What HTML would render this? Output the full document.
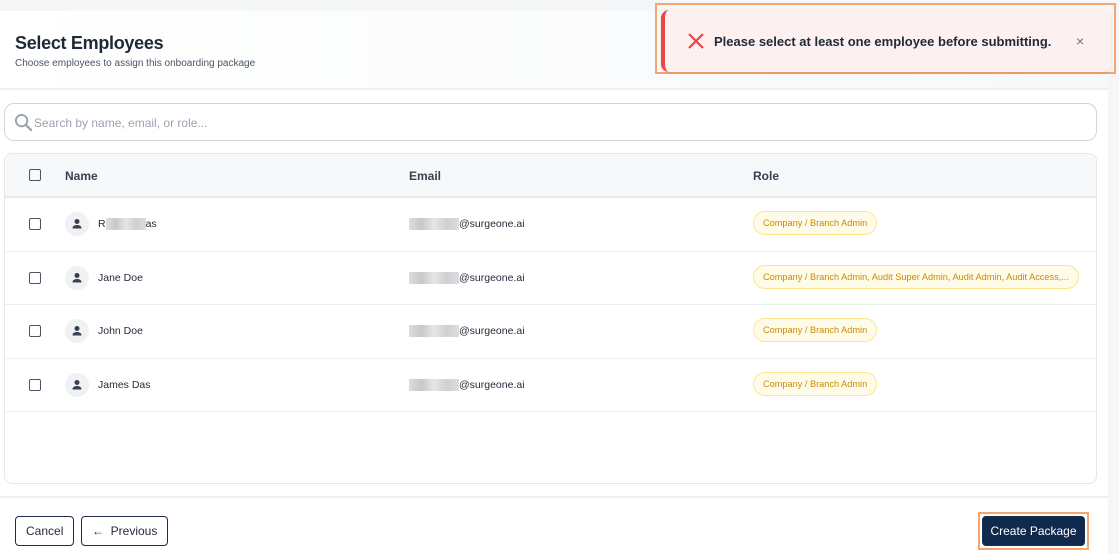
<!DOCTYPE html>
<html><head><meta charset="utf-8"><style>
*{box-sizing:border-box;margin:0;padding:0}
body{width:1119px;height:554px;overflow:hidden;background:#f5f6f8;font-family:"Liberation Sans",sans-serif;color:#111827;position:relative}
.card{position:absolute;left:0;top:11px;width:1108px;height:543px;background:#fff}
.hdr{position:absolute;left:0;top:0;width:1108px;height:79px;background:linear-gradient(90deg,#fff,#f7f8fa);border-bottom:2px solid #eef0f3}
.hdr h1{position:absolute;left:15px;top:22px;font-size:18px;font-weight:bold;color:#1f2937;letter-spacing:-0.3px}
.hdr p{position:absolute;left:15px;top:47px;font-size:10px;color:#4b5563}
.search{position:absolute;left:4px;top:92px;width:1093px;height:38px;border:1px solid #d1d5db;border-radius:10px}
.search span{position:absolute;left:29px;top:12px;font-size:12px;color:#9ca3af}
.tbl{position:absolute;left:4px;top:142px;width:1093px;height:331px;border:1px solid #e5e7eb;border-radius:8px;overflow:hidden}
.th{height:44px;background:#f7f8fa;border-bottom:2px solid #e5e7eb;position:relative;font-size:12px;font-weight:bold;color:#374151}
.row{height:53.5px;border-bottom:1px solid #eceef1;position:relative;font-size:10.5px;color:#1f2937}
.cb{position:absolute;left:24px;width:12px;height:12px;border:1.3px solid #4b5563;border-radius:2px;top:50%;margin-top:-6px}
.av{position:absolute;left:60px;top:14px;width:24px;height:24px;border-radius:50%;background:#f0f1f3}
.nm{position:absolute;left:93px;top:20px}
.em{position:absolute;left:404px;top:20px}
.blur{display:inline-block;width:50px;height:12px;vertical-align:middle;background:linear-gradient(90deg,#ddd,#c8c8cc,#e6e6e6,#cfd0d4,#ddd)}
.badge{position:absolute;left:748px;top:13px;height:24px;line-height:22px;padding:0 9px;border:1px solid #fde68a;background:#fefce8;border-radius:12px;font-size:9.2px;color:#ca8a04}
.foot{position:absolute;left:0;top:485px;width:1108px;height:2px;background:#eef0f3}
.btn{position:absolute;top:505px;height:30px;border:1px solid #1e2b4a;border-radius:4px;font-size:12px;line-height:28px;padding:0 10px;background:#fff;color:#1f2937}
.toast{position:absolute;left:655px;top:3px;width:461px;height:71px;border:2px solid #f6a66c}
.ti{position:absolute;left:4px;top:5px;width:450px;height:62px;background:#fdf0f0;border-left:4px solid #ef4444;border-radius:8px;box-shadow:0 1px 3px rgba(0,0,0,.1)}
</style></head><body>
<div class="card">
<div class="hdr"><h1>Select Employees</h1><p>Choose employees to assign this onboarding package</p></div>
<div class="search"><svg style="position:absolute;left:9px;top:9px" width="19" height="19" viewBox="0 0 20 20"><circle cx="8" cy="8" r="6" fill="none" stroke="#9ca3af" stroke-width="2"/><path d="M12.5 12.5L18 18" stroke="#9ca3af" stroke-width="2.4" stroke-linecap="round"/></svg><span>Search by name, email, or role...</span></div>
<div class="tbl">
<div class="th"><div class="cb"></div><span style="position:absolute;left:60px;top:15px">Name</span><span style="position:absolute;left:404px;top:15px">Email</span><span style="position:absolute;left:748px;top:15px">Role</span></div>
<div class="row"><div class="cb"></div><div class="av"><svg width="24" height="24" viewBox="0 0 24 24"><circle cx="12" cy="9.5" r="2.5" fill="#374151"/><path d="M7.5 16.5c0-2.5 2-3.5 4.5-3.5s4.5 1 4.5 3.5z" fill="#374151"/></svg></div><span class="nm">R<span class="blur" style="width:40px"></span>as</span><span class="em"><span class="blur"></span>@surgeone.ai</span><span class="badge">Company / Branch Admin</span></div>
<div class="row"><div class="cb"></div><div class="av"><svg width="24" height="24" viewBox="0 0 24 24"><circle cx="12" cy="9.5" r="2.5" fill="#374151"/><path d="M7.5 16.5c0-2.5 2-3.5 4.5-3.5s4.5 1 4.5 3.5z" fill="#374151"/></svg></div><span class="nm">Jane Doe</span><span class="em"><span class="blur"></span>@surgeone.ai</span><span class="badge">Company / Branch Admin, Audit Super Admin, Audit Admin, Audit Access,...</span></div>
<div class="row"><div class="cb"></div><div class="av"><svg width="24" height="24" viewBox="0 0 24 24"><circle cx="12" cy="9.5" r="2.5" fill="#374151"/><path d="M7.5 16.5c0-2.5 2-3.5 4.5-3.5s4.5 1 4.5 3.5z" fill="#374151"/></svg></div><span class="nm">John Doe</span><span class="em"><span class="blur"></span>@surgeone.ai</span><span class="badge">Company / Branch Admin</span></div>
<div class="row"><div class="cb"></div><div class="av"><svg width="24" height="24" viewBox="0 0 24 24"><circle cx="12" cy="9.5" r="2.5" fill="#374151"/><path d="M7.5 16.5c0-2.5 2-3.5 4.5-3.5s4.5 1 4.5 3.5z" fill="#374151"/></svg></div><span class="nm">James Das</span><span class="em"><span class="blur"></span>@surgeone.ai</span><span class="badge">Company / Branch Admin</span></div>
</div>
<div class="foot"></div>
<div class="btn" style="left:15px">Cancel</div>
<div class="btn" style="left:81px">&#8592;&nbsp; Previous</div>
<div style="position:absolute;left:978px;top:501px;width:111px;height:38px;border:2px solid #f6a66c"></div>
<div class="btn" style="left:982px;top:505px;background:#0f2a4d;color:#fff;width:103px;padding:0;text-align:center">Create Package</div>
</div>
<div class="toast"><div class="ti">
<svg style="position:absolute;left:22px;top:22px" width="18" height="18" viewBox="0 0 18 18"><path d="M2 2L16 16M16 2L2 16" stroke="#ef4444" stroke-width="2.2"/></svg>
<span style="position:absolute;left:49px;top:24px;font-size:13px;font-weight:bold;color:#1f2937">Please select at least one employee before submitting.</span>
<span style="position:absolute;left:411px;top:23px;font-size:14px;color:#6b7280">&#215;</span>
</div></div>
</body></html>
